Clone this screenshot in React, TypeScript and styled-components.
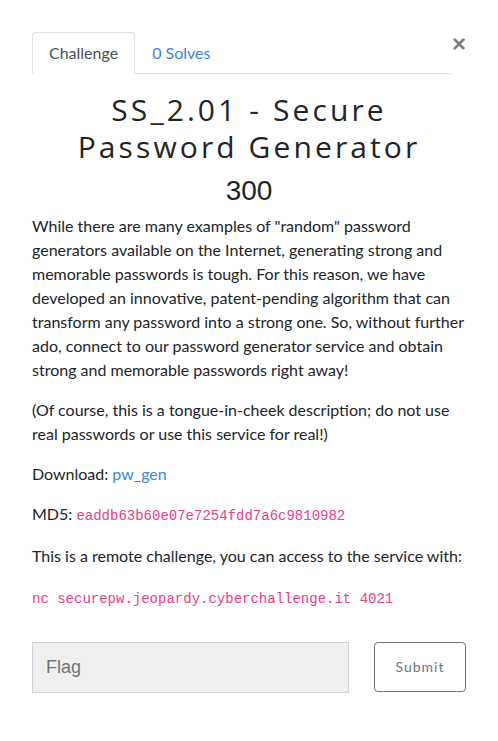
import React from "react";
import styled, { createGlobalStyle } from "styled-components";

const GlobalStyle = createGlobalStyle`
  html, body { margin: 0; padding: 0; background: #ffffff; }
  body {
    font-family: Lato, "Noto Sans", sans-serif;
    font-size: 16px;
    line-height: 1.5;
    color: #212529;
  }
  * { box-sizing: border-box; }
`;

const Page = styled.div`
  padding: 32px 32px 40px 32px;
  width: 498px;
`;

const Header = styled.div`
  display: flex;
  align-items: flex-start;
`;

const Tabs = styled.ul`
  display: flex;
  flex: 1;
  list-style: none;
  margin: 0;
  padding: 0;
  border-bottom: 1px solid #dee2e6;
`;

const Tab = styled.li<{ $active?: boolean }>`
  margin-bottom: -1px;
  padding: 8px 16px;
  border: 1px solid ${(p) => (p.$active ? "#dee2e6" : "transparent")};
  border-bottom-color: ${(p) => (p.$active ? "#ffffff" : "transparent")};
  border-radius: 4px 4px 0 0;
  background: ${(p) => (p.$active ? "#ffffff" : "transparent")};
  color: ${(p) => (p.$active ? "#495057" : "#3a86d8")};
  font-size: 16px;
  line-height: 24px;
`;

const Close = styled.button`
  flex: none;
  border: 0;
  background: transparent;
  padding: 0;
  margin: 0 0 0 1px;
  width: 14px;
  height: 24px;
  font-family: "Liberation Sans", Arial, sans-serif;
  font-size: 24px;
  font-weight: 700;
  line-height: 24px;
  color: #000000;
  opacity: 0.5;
`;

const Title = styled.h2`
  margin: 17px 0 0 0;
  text-align: center;
  font-family: "Open Sans", sans-serif;
  font-weight: 400;
  font-size: 30px;
  line-height: 37px;
  letter-spacing: 3.1px;
  color: #212529;
`;

const Points = styled.h3`
  margin: 9px 0 6px 0;
  text-align: center;
  font-family: "Liberation Sans", Arial, sans-serif;
  font-weight: 400;
  font-size: 28px;
  line-height: 33.6px;
  color: #212529;
`;

const Text = styled.p`
  margin: 0 0 16px 0;
  font-size: 16px;
  line-height: 24px;
`;

const Link = styled.a`
  color: #3a86d8;
  text-decoration: none;
`;

const Code = styled.code`
  font-family: "Liberation Mono", "Courier New", monospace;
  font-size: 14px;
  color: #e83e8c;
`;

const Pre = styled.pre`
  margin: 0 0 16px 0;
  padding-top: 3px;
  font-family: "Liberation Mono", "Courier New", monospace;
  font-size: 14px;
  line-height: 24px;
  color: #e83e8c;
`;

const Form = styled.form`
  display: grid;
  grid-template-columns: 317px 92px;
  column-gap: 25px;
  margin-top: 31px;
`;

const FlagInput = styled.input`
  height: 51px;
  padding: 0 13px;
  border: 1px solid #ced4da;
  border-radius: 0;
  background: #efefef;
  font-family: "Liberation Sans", Arial, sans-serif;
  font-size: 18px;
  color: #495057;
  outline: none;
  &::placeholder { color: #6c757d; opacity: 1; }
`;

const SubmitButton = styled.button`
  height: 50px;
  border: 1px solid #6c757d;
  border-radius: 4px;
  background: #ffffff;
  color: #6c757d;
  font-family: Lato, sans-serif;
  font-size: 14px;
  letter-spacing: 1px;
`;

export default function App() {
  return (
    <>
      <GlobalStyle />
      <Page>
        <Header>
          <Tabs>
            <Tab $active>Challenge</Tab>
            <Tab>0 Solves</Tab>
          </Tabs>
          <Close aria-label="Close">×</Close>
        </Header>
        <Title>
          SS_2.01 - Secure
          <br />
          Password Generator
        </Title>
        <Points>300</Points>
        <Text>
          While there are many examples of "random" password generators available on the
          Internet, generating strong and memorable passwords is tough. For this reason, we
          have developed an innovative, patent-pending algorithm that can transform any
          password into a strong one. So, without further ado, connect to our password
          generator service and obtain strong and memorable passwords right away!
        </Text>
        <Text>
          (Of course, this is a tongue-in-cheek description; do not use real passwords or use
          this service for real!)
        </Text>
        <Text>
          Download: <Link href="#">pw_gen</Link>
        </Text>
        <Text>
          MD5: <Code>eaddb63b60e07e7254fdd7a6c9810982</Code>
        </Text>
        <Text>This is a remote challenge, you can access to the service with:</Text>
        <Pre>nc securepw.jeopardy.cyberchallenge.it 4021</Pre>
        <Form onSubmit={(e) => e.preventDefault()}>
          <FlagInput placeholder="Flag" />
          <SubmitButton type="submit">Submit</SubmitButton>
        </Form>
      </Page>
    </>
  );
}
